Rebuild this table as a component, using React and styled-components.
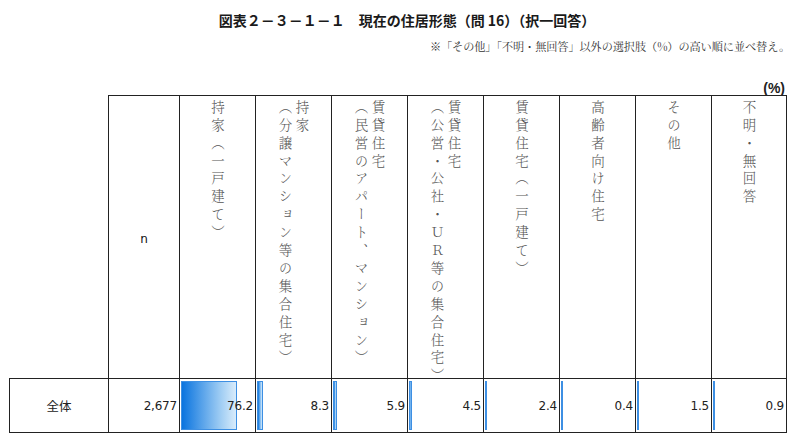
import React from "react";
import styled, { createGlobalStyle } from "styled-components";

const Global = createGlobalStyle`
  html, body { margin: 0; padding: 0; background: #fff; }
  body { width: 800px; height: 440px; overflow: hidden; }
`;

const Page = styled.div`
  width: 800px;
  height: 440px;
  display: flex;
  flex-direction: column;
`;

const Title = styled.h1`
  margin: 12px 0 0 0;
  padding-left: 14px;
  text-align: center;
  font-family: "Noto Sans CJK JP", "DejaVu Sans", sans-serif;
  font-weight: bold;
  font-size: 14px;
  line-height: 17px;
  color: #1a1a1a;
`;

const Note = styled.div`
  margin: 10px 10px 0 0;
  text-align: right;
  font-family: "Noto Serif CJK JP", "Liberation Serif", "Noto Sans CJK JP", serif;
  font-size: 11.2px;
  line-height: 14px;
  color: #333;
  letter-spacing: -0.1px;
`;

const Unit = styled.div`
  margin: 28px 15px 0 0;
  text-align: right;
  font-family: "Liberation Sans", sans-serif;
  font-weight: bold;
  font-size: 14px;
  line-height: 14px;
  color: #222;
`;

const Table = styled.div`
  margin: 0 0 0 9px;
  display: grid;
  grid-template-columns: 99px 71px repeat(8, 76px);
  grid-template-rows: 283px 55px;
`;

const Blank = styled.div``;

const Cell = styled.div`
  box-sizing: border-box;
  border-left: 1.5px solid #222;
  border-top: 1.5px solid #222;
  ${(p) => (p.$last ? "border-right: 1.5px solid #222;" : "")}
  ${(p) => (p.$bottom ? "border-bottom: 1.5px solid #222;" : "")}
  position: relative;
`;

const HeadCell = styled(Cell)`
  display: flex;
  justify-content: center;
  align-items: ${(p) => (p.$center ? "center" : "flex-start")};
  padding-top: 4px;
`;

const NLabel = styled.span`
  font-family: "DejaVu Sans", sans-serif;
  font-size: 12px;
  color: #111;
`;

const VText = styled.div`
  writing-mode: vertical-rl;
  font-family: "Noto Serif CJK JP", "Noto Sans CJK JP", serif;
  font-size: 13.5px;
  font-weight: 300;
  line-height: 17px;
  letter-spacing: 4.4px;
  color: #555;
  white-space: pre;
`;

const LabelCell = styled(Cell)`
  display: flex;
  align-items: center;
  justify-content: center;
  font-family: "Noto Sans CJK JP", sans-serif;
  font-size: 12.5px;
  color: #222;
`;

const NumCell = styled(Cell)`
  display: flex;
  align-items: center;
  justify-content: flex-end;
  padding-right: 2px;
  font-family: "DejaVu Sans", sans-serif;
  font-size: 12px;
  color: #222;
  letter-spacing: -0.2px;
`;

const Bar = styled.div`
  position: absolute;
  left: 1px;
  top: 2px;
  bottom: 2px;
  box-sizing: border-box;
  border: 1px solid #3d8fe3;
  background: linear-gradient(to right, #0a74df, #9ccbf3 70%, #d9ecfb);
`;

const Value = styled.span`
  position: relative;
`;

const headers = [
  "持家（一戸建て）",
  "持家\n（分譲マンション等の集合住宅）",
  "賃貸住宅\n（民営のアパート、マンション）",
  "賃貸住宅\n（公営・公社・ＵＲ等の集合住宅）",
  "賃貸住宅（一戸建て）",
  "高齢者向け住宅",
  "その他",
  "不明・無回答",
];

const values = [76.2, 8.3, 5.9, 4.5, 2.4, 0.4, 1.5, 0.9];

export default function App() {
  return (
    <Page>
      <Global />
      <Title>図表２－３－１－１　現在の住居形態（問 16）（択一回答）</Title>
      <Note>※「その他」「不明・無回答」以外の選択肢（%）の高い順に並べ替え。</Note>
      <Unit>(%)</Unit>
      <Table>
        <Blank />
        <HeadCell $center>
          <NLabel>n</NLabel>
        </HeadCell>
        {headers.map((h, i) => (
          <HeadCell key={h} $last={i === headers.length - 1}>
            <VText>{h}</VText>
          </HeadCell>
        ))}
        <LabelCell $bottom>全体</LabelCell>
        <NumCell $bottom>2,677</NumCell>
        {values.map((v, i) => (
          <NumCell key={i} $bottom $last={i === values.length - 1}>
            <Bar style={{ width: `${Math.max(1.5, (v / 100) * 74)}px` }} />
            <Value>{v.toFixed(1)}</Value>
          </NumCell>
        ))}
      </Table>
    </Page>
  );
}
